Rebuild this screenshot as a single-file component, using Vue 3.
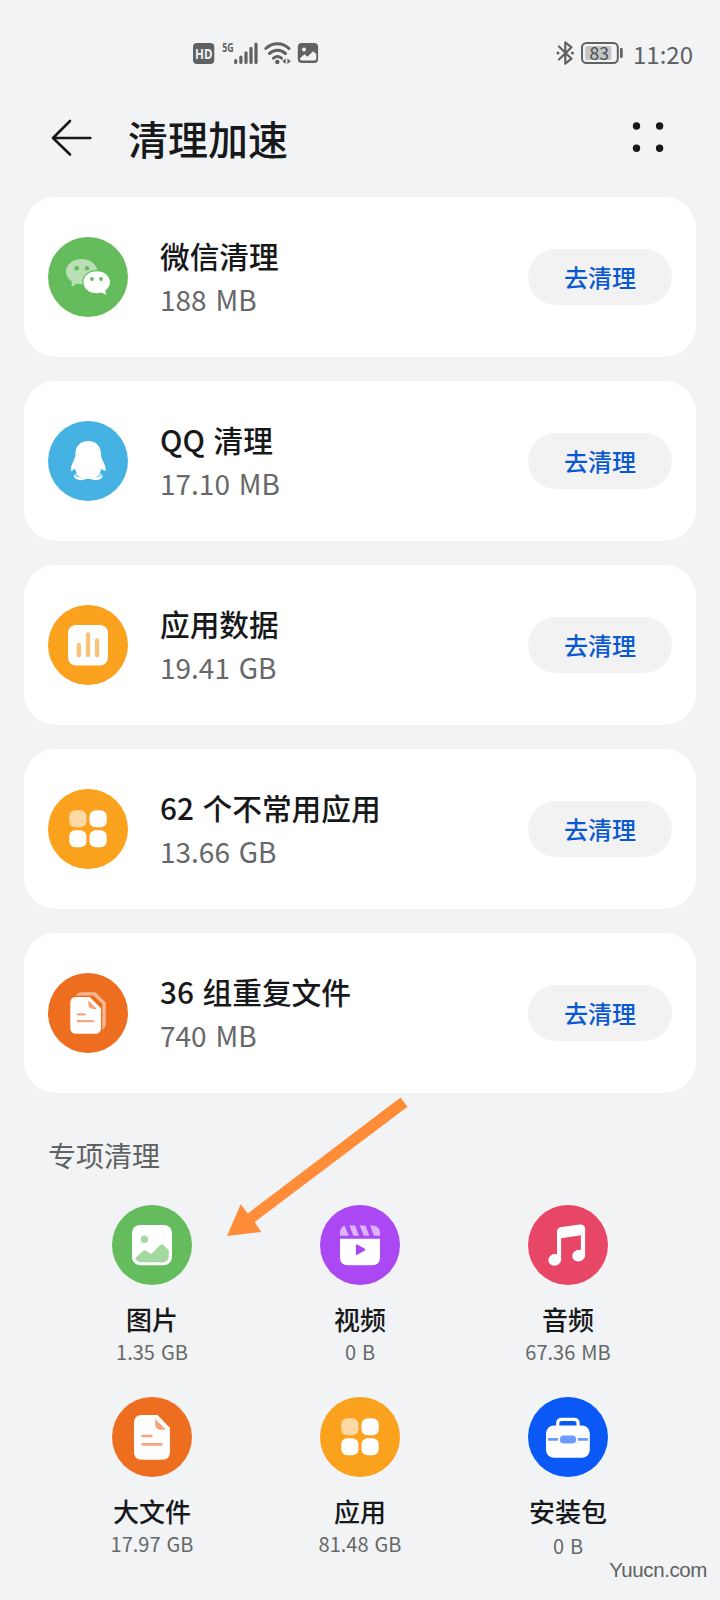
<script setup>
const cards = [
  { icon: 'wechat', title: '微信清理', size: '188 MB' },
  { icon: 'qq', title: 'QQ 清理', size: '17.10 MB' },
  { icon: 'chart', title: '应用数据', size: '19.41 GB' },
  { icon: 'apps', title: '62 个不常用应用', size: '13.66 GB' },
  { icon: 'copies', title: '36 组重复文件', size: '740 MB' },
]
const tiles = [
  { icon: 'image', title: '图片', size: '1.35 GB' },
  { icon: 'video', title: '视频', size: '0 B' },
  { icon: 'music', title: '音频', size: '67.36 MB' },
  { icon: 'file', title: '大文件', size: '17.97 GB' },
  { icon: 'apps', title: '应用', size: '81.48 GB' },
  { icon: 'case', title: '安装包', size: '0 B', low: true },
]
</script>

<template>
  <div class="screen">
    <svg class="sprite" aria-hidden="true">
      <symbol id="wechat" viewBox="0 0 80 80">
        <circle cx="40" cy="40" r="40" fill="#64bc5c" />
        <path d="M33.6 22C24.8 22 18 27.500 18 34.600c0 4.200 2.200 7.600 5.800 9.900L23.600 49.700l5.400-3.100c1.500.4 3 .6 4.600.6 8.800 0 15.700-5.500 15.700-12.600S42.400 22 33.600 22z" fill="#b9e0b5" />
        <circle cx="28.700" cy="31.300" r="2.300" fill="#64bc5c" /><circle cx="39" cy="31.300" r="2.300" fill="#64bc5c" />
        <path d="M48.700 34.300c-7.400 0-13.300 4.900-13.300 11s5.900 11 13.300 11c1.700 0 3.300-.3 4.700-.7l4.700 2.200-.8-4.400c2.900-2 4.700-4.900 4.700-8.100 0-6.100-5.900-11-13.300-11z" fill="#fff" stroke="#64bc5c" stroke-width="2.400" paint-order="stroke" />
        <circle cx="44" cy="42" r="1.900" fill="#64bc5c" /><circle cx="53" cy="42" r="1.900" fill="#64bc5c" />
      </symbol>
      <symbol id="qq" viewBox="0 0 80 80">
        <circle cx="40" cy="40" r="40" fill="#45b2e3" />
        <ellipse cx="33" cy="55.300" rx="7" ry="3.900" fill="#fff" /><ellipse cx="47.500" cy="55.300" rx="7" ry="3.900" fill="#fff" />
        <ellipse cx="31.800" cy="54" rx="4.800" ry="2.500" fill="#a5dbf3" /><ellipse cx="48.700" cy="54" rx="4.800" ry="2.500" fill="#a5dbf3" />
        <path d="M40.200 20c-8 0-12.700 5.500-12.700 12.500 0 3-.6 5-2.400 8.500-1.600 3.300-2.600 6-2.200 8.500.4 1.500 2.700-.8 4-2 1.400 5.800 5.300 10.600 13.300 10.600S52.100 53.300 53.500 47.500c1.300 1.200 3.700 3.500 4.100 2 .4-2.500-.6-5.200-2.200-8.500-1.800-3.500-2.500-5.500-2.500-8.500 0-7-4.700-12.500-12.700-12.500z" fill="#fff" />
      </symbol>
      <symbol id="chart" viewBox="0 0 80 80">
        <circle cx="40" cy="40" r="40" fill="#faa21e" />
        <rect x="20" y="20" width="40" height="40.500" rx="8" fill="#fff" />
        <path d="M30.800 39.800V50.200M40 29.300V50.200M49.100 35.500V50.200" stroke="#f9c27a" stroke-width="4.300" stroke-linecap="round" />
      </symbol>
      <symbol id="apps" viewBox="0 0 80 80">
        <circle cx="40" cy="40" r="40" fill="#faa21e" />
        <rect x="21.200" y="21.300" width="17.200" height="17" rx="6" fill="#fcd8a4" />
        <rect x="41.500" y="21.300" width="17.200" height="17" rx="6" fill="#fff" />
        <rect x="21.200" y="41.300" width="17.200" height="17" rx="6" fill="#fff" />
        <rect x="41.500" y="41.300" width="17.200" height="17" rx="6" fill="#fff" />
      </symbol>
      <symbol id="copies" viewBox="0 0 80 80">
        <circle cx="40" cy="40" r="40" fill="#ee6e20" />
        <path d="M28 22.500c1.300-2.400 3-3.200 5.500-3.200h14L57.800 29.500V50c0 3.500-.8 5.300-3.500 6.500V31L45.500 22.500z" fill="#f9b68e" />
        <path d="M28.500 24h13.200L53 35.200V54.500c0 4.300-2 6.300-6.300 6.300H28.600c-4.300 0-6.300-2-6.300-6.300V30.300c0-4.300 2-6.300 6.200-6.300z" fill="#fff" />
        <path d="M40.300 27.300 49 36h-3.800c-3.300 0-4.900-1.600-4.900-4.900z" fill="#f5a57c" />
        <path d="M29.700 41.300h7M29.700 48.200h15.500" stroke="#f5a57c" stroke-width="2.200" stroke-linecap="round" />
      </symbol>
      <symbol id="image" viewBox="0 0 80 80">
        <circle cx="40" cy="40" r="40" fill="#64bc5c" />
        <rect x="20" y="20" width="40" height="40.200" rx="8" fill="#fff" />
        <circle cx="32.400" cy="34.200" r="3.700" fill="#a3d99e" />
        <path d="M24.200 52.200 31 46.100c1.200-1.100 2.400-1.200 3.600-.2l2.900 2.300c1 .7 1.900.6 2.800-.3l7.300-7.300c1.500-1.400 3-1.400 4.400 0l4.800 4.600v5.300c0 4.600-2.200 6.800-6.800 6.800H30c-3.600 0-5.500-1.400-6.200-3.200-.3-.8-.1-1.400.4-1.900z" fill="#a3d99e" />
      </symbol>
      <symbol id="video" viewBox="0 0 80 80">
        <circle cx="40" cy="40" r="40" fill="#ab47f3" />
        <path d="M20 30.700v-2.500c0-3.500 2-6.600 4.600-7.600L28.800 30.700zM29.300 20.400h5.800L39 30.700h-5.700zM39.700 20.400h5.800L49.400 30.700h-5.700zM50 20.400h2.200c5 0 7.800 2.900 7.800 7.800v2.500h-6z" fill="#dcb2fb" />
        <path d="M20 33.700h40v18.500c0 5.300-2.700 8-8 8H28c-5.300 0-8-2.700-8-8z" fill="#fff" />
        <path d="M36.800 40.300v8.600l7.600-4.300z" fill="#ab47f3" stroke="#ab47f3" stroke-width="1.800" stroke-linejoin="round" />
      </symbol>
      <symbol id="music" viewBox="0 0 80 80">
        <circle cx="40" cy="40" r="40" fill="#e74664" />
        <ellipse cx="26.800" cy="54.800" rx="6.500" ry="5.800" transform="rotate(-20 26.800 54.800)" fill="#fff" />
        <ellipse cx="50.600" cy="50.600" rx="6.500" ry="5.800" transform="rotate(-20 50.600 50.600)" fill="#fff" />
        <path d="M29 54V27c0-3 1.500-4.600 4.600-5.100l18-2.400c3.600-.4 5.500 1.200 5.500 4.700V51h-4.200V30.300l-19.800 2.900V54z" fill="#fff" />
      </symbol>
      <symbol id="file" viewBox="0 0 80 80">
        <circle cx="40" cy="40" r="40" fill="#ee6e20" />
        <path d="M30 18h15.500L57.900 30.800V54.800c0 5.300-2.500 8-7.900 8H30c-5.300 0-8-2.700-8-8V26c0-5.300 2.700-8 8-8z" fill="#fff" />
        <path d="M43.200 22 54 32.800h-4.800c-4 0-6-2-6-6z" fill="#f5a57c" />
        <path d="M30.400 39h9M30.400 47.300h19" stroke="#f5a57c" stroke-width="2.700" stroke-linecap="round" />
      </symbol>
      <symbol id="case" viewBox="0 0 80 80">
        <circle cx="40" cy="40" r="40" fill="#0a59f7" />
        <path d="M29.700 30v-3.500c0-2.800 1.400-4.200 4.200-4.200h12c2.800 0 4.200 1.400 4.200 4.200V30" fill="none" stroke="#fff" stroke-width="3.200" />
        <rect x="18" y="28.500" width="43.800" height="32.300" rx="8" fill="#fff" />
        <path d="M20 42.400h10M49.700 42.400H60" stroke="#6c9bfa" stroke-width="2.700" />
        <rect x="32" y="38.500" width="16" height="7.900" rx="3.500" fill="#6c9bfa" />
      </symbol>
    </svg>

    <header class="status">
      <svg width="130" height="30" viewBox="190 38 130 30">
        <rect x="193" y="43" width="21.300" height="21" rx="4" fill="#5f6163" />
        <text x="195" y="58.900" class="hd" textLength="17.400" lengthAdjust="spacingAndGlyphs">HD</text>
        <text x="222.300" y="51.500" class="net" textLength="11.500" lengthAdjust="spacingAndGlyphs">5G</text>
        <path d="M235.700 60.700v1.700M240.900 57v5.400M246 52.800v9.600M251 48.300v14.100M256 44.200v18.200" stroke="#5f6163" stroke-width="3.200" stroke-linecap="round" />
        <g fill="none" stroke="#5f6163" stroke-width="3" stroke-linecap="round">
          <path d="M265.800 48.500c7-6.300 16.500-6.300 23.200 0M269.500 53.500c4.800-4.200 11.200-4.200 16 0M273.500 58.200c2.400-2 5.600-2 8 0" />
        </g>
        <circle cx="277.300" cy="62" r="2.200" fill="#5f6163" />
        <path d="M285.700 58.500v5.500l-3.400-2.700zM287.400 58.500v5.500l3.400-2.700z" fill="#5f6163" />
        <rect x="297.800" y="43" width="20.300" height="20" rx="4" fill="#5f6163" />
        <circle cx="304" cy="49.500" r="2" fill="#f1f3f5" />
        <path d="M300 58.300 304.500 54.300l3 2.400 5.500-5.400 3.300 2.600v4.400c0 1.600-.7 2.300-2.300 2.300H302c-1.400 0-2-.8-2-2.300z" fill="#f1f3f5" />
      </svg>
      <div class="status-right">
        <svg width="70" height="30" viewBox="555 38 70 30">
          <path d="M559 46.500 571.500 58.700l-6.200 5V42.300l6.200 5L559 59.500" fill="none" stroke="#5f6163" stroke-width="2.200" stroke-linejoin="round" stroke-linecap="round" />
          <circle cx="558" cy="53" r="1.500" fill="#5f6163" /><circle cx="572.500" cy="53" r="1.500" fill="#5f6163" />
          <rect x="582" y="43" width="35.800" height="20" rx="4.500" fill="none" stroke="#5f6163" stroke-width="2" />
          <rect x="585.300" y="46" width="26" height="14" rx="1.500" fill="#c3c4c6" />
          <rect x="620" y="48" width="2.700" height="10" rx="1" fill="#5f6163" />
          <text x="599.300" y="59.500" class="level" text-anchor="middle">83</text>
        </svg>
        <span class="clock">11:20</span>
      </div>
    </header>

    <nav class="bar">
      <svg class="back" width="42" height="40" viewBox="51 118 42 40">
        <path d="M90.300 138H53.500M70 121 53 138l17 16.500" fill="none" stroke="#17181a" stroke-width="2.600" stroke-linecap="round" stroke-linejoin="round" />
      </svg>
      <h1>清理加速</h1>
      <svg class="more" width="32" height="32" viewBox="0 0 32 32" fill="#17181a">
        <circle cx="4.500" cy="5" r="3.700" /><circle cx="27.600" cy="5" r="3.700" />
        <circle cx="4.500" cy="27.200" r="3.700" /><circle cx="27.600" cy="27.200" r="3.700" />
      </svg>
    </nav>

    <main>
      <section v-for="c in cards" :key="c.title" class="card">
        <svg class="icon"><use :href="'#' + c.icon" /></svg>
        <div class="info">
          <h2>{{ c.title }}</h2>
          <p>{{ c.size }}</p>
        </div>
        <button>去清理</button>
      </section>
    </main>

    <h3>专项清理</h3>
    <div class="grid">
      <div v-for="t in tiles" :key="t.title" class="tile">
        <svg class="icon"><use :href="'#' + t.icon" /></svg>
        <strong>{{ t.title }}</strong>
        <span :class="{ low: t.low }">{{ t.size }}</span>
      </div>
    </div>

    <svg class="arrow" width="184" height="142" viewBox="225 1096 184 142">
      <path d="M227 1236 240.700 1204.300 247.700 1213.500 400.500 1097.500 407.500 1106.700 254.700 1222 261.200 1232z" fill="#ff8c38" />
    </svg>
    <div class="watermark">Yuucn.com</div>
  </div>
</template>

<style>
body {
  background: #f1f3f5;
}
</style>

<style scoped>
.screen {
  position: relative;
  width: 720px;
  height: 1600px;
  overflow: hidden;
  background: #f1f3f5;
  color: #17181a;
  font-family: "Noto Sans CJK SC", "Noto Sans", sans-serif;
}
.sprite {
  position: absolute;
  width: 0;
  height: 0;
}
svg {
  display: block;
  flex: none;
}
h1, h2, h3, p {
  margin: 0;
  font-weight: 400;
}
.status {
  box-sizing: border-box;
  height: 100px;
  padding: 38px 28px 0 190px;
  display: flex;
  justify-content: space-between;
}
.hd {
  font: 700 14px "Noto Sans", sans-serif;
  fill: #f1f3f5;
}
.net {
  font: 700 12px "Noto Sans", sans-serif;
  fill: #5f6163;
}
.level {
  font: 400 17.500px "Noto Sans CJK SC", sans-serif;
  fill: #4a4c4e;
}
.status-right {
  display: flex;
  gap: 8px;
}
.clock {
  width: 59px;
  line-height: 32px;
  font-size: 24px;
  color: #5f6163;
  white-space: nowrap;
}
.bar {
  height: 76px;
  padding: 0 56px 0 51px;
  display: flex;
  align-items: center;
}
h1 {
  flex: 1;
  margin-left: 35px;
  font-size: 40px;
  font-weight: 500;
  line-height: 76px;
}
.more {
  margin-top: -2px;
}
main {
  display: flex;
  flex-direction: column;
  gap: 24px;
  padding: 21px 24px 0;
}
.card {
  box-sizing: border-box;
  height: 160px;
  padding: 0 24px;
  display: flex;
  align-items: center;
  background: #fff;
  border-radius: 32px;
}
.icon {
  width: 80px;
  height: 80px;
}
.info {
  flex: 1;
  margin: 1px 0 0 32px;
}
h2 {
  font-size: 29.700px;
  font-weight: 500;
  line-height: 43px;
  word-spacing: 2px;
}
.info p {
  font-size: 28px;
  line-height: 44px;
  word-spacing: 2.500px;
  color: #66686a;
}
button {
  width: 144px;
  height: 56px;
  padding: 0 0 2px;
  border: 0;
  border-radius: 28px;
  background: #f2f2f3;
  color: #0a59d0;
  font: 500 24px "Noto Sans CJK SC", sans-serif;
}
h3 {
  margin: 40px 0 0 48px;
  font-size: 28px;
  line-height: 44px;
  color: #5f6163;
}
.grid {
  margin: 27.500px 48px 0;
  display: grid;
  grid-template-columns: repeat(3, 208px);
  grid-auto-rows: 192px;
}
.tile {
  display: flex;
  flex-direction: column;
  align-items: center;
}
.tile strong {
  margin-top: 15.500px;
  font-size: 26px;
  font-weight: 500;
  line-height: 38px;
}
.tile span {
  margin-top: 1px;
  line-height: 26px;
  font-size: 20px;
  word-spacing: 1.500px;
  color: #66686a;
}
.tile .low {
  margin-top: 3px;
}
.arrow {
  position: absolute;
  left: 225px;
  top: 1096px;
}
.watermark {
  position: absolute;
  right: 13px;
  bottom: 18px;
  font: 20.500px/24px "Liberation Sans", Arial, sans-serif;
  letter-spacing: -0.4px;
  color: #5f6163;
}
</style>
